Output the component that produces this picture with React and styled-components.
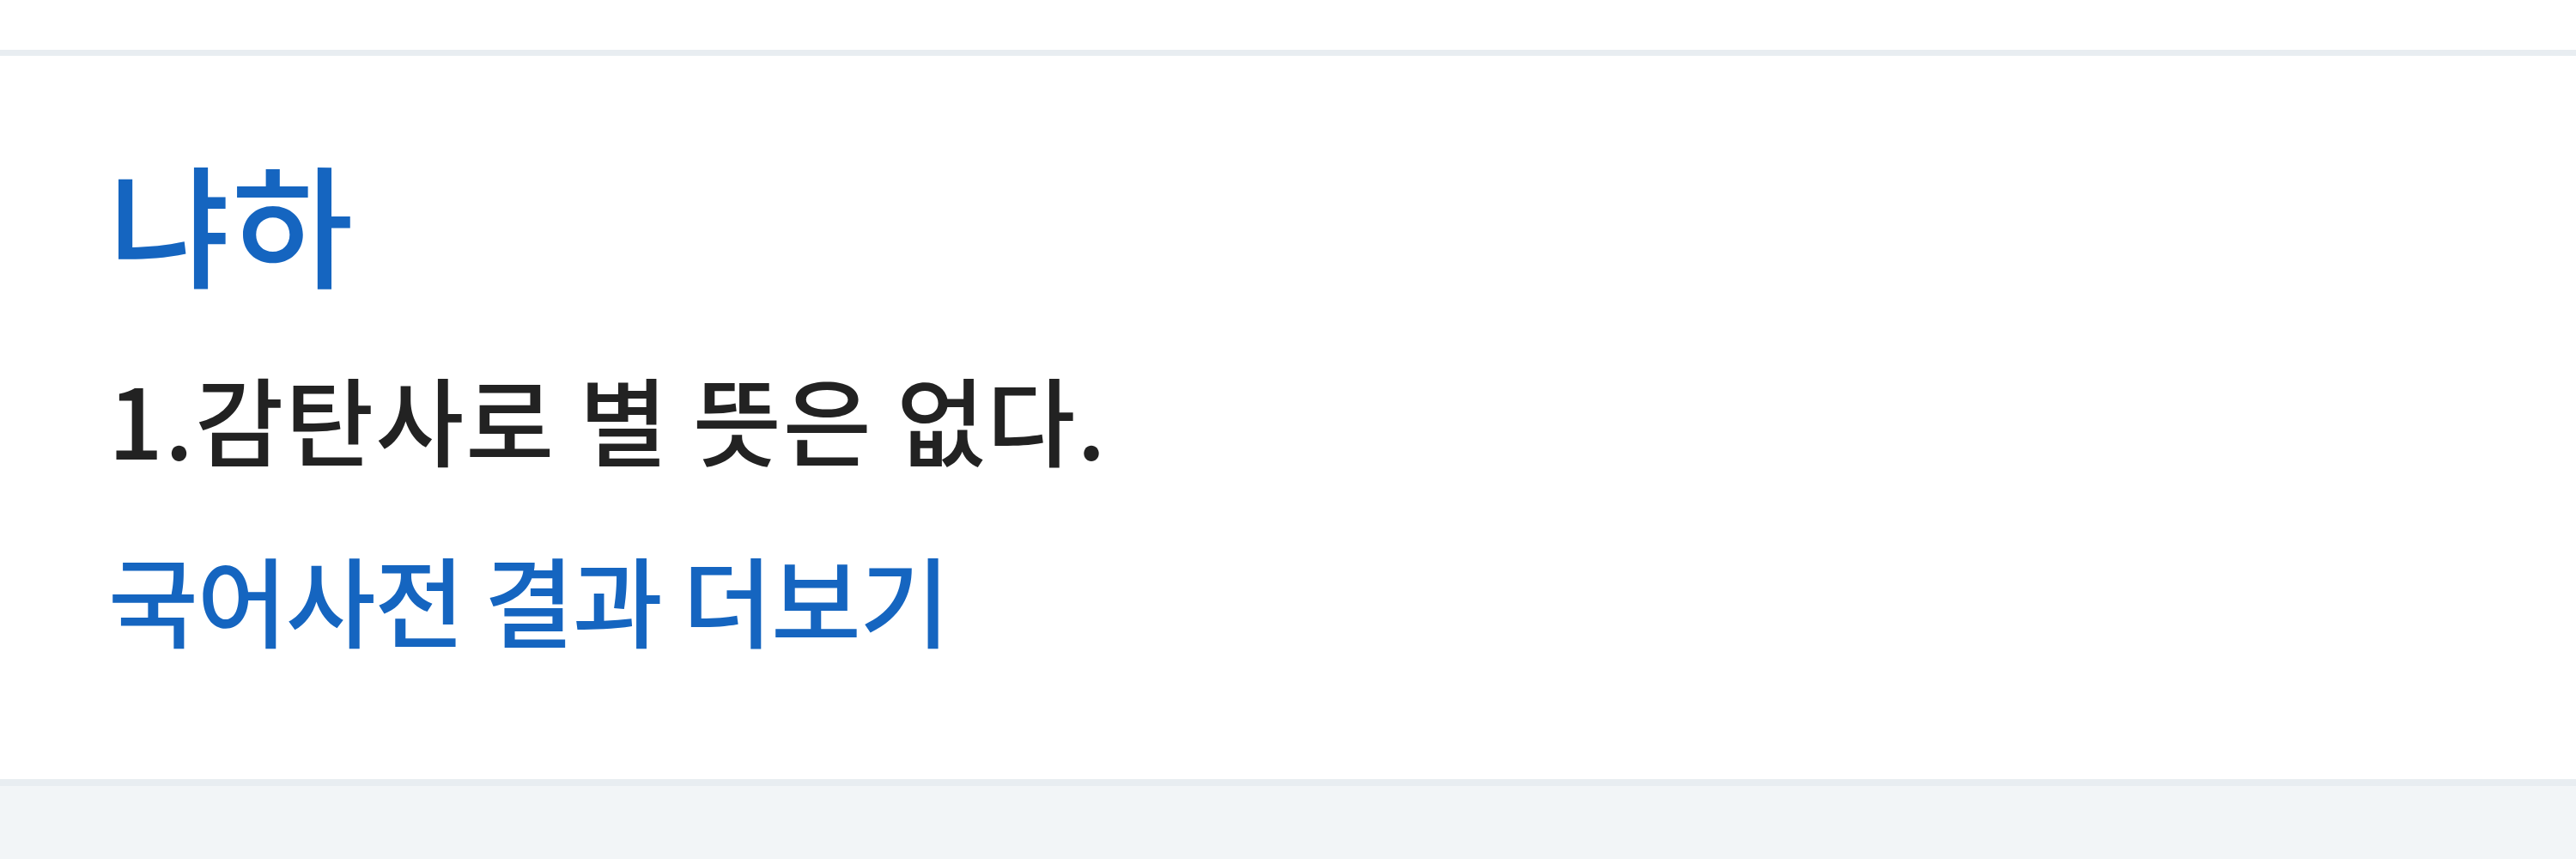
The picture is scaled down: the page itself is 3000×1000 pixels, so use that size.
import styled, { createGlobalStyle } from "styled-components";

const GlobalStyle = createGlobalStyle`
  html, body {
    margin: 0;
    padding: 0;
    background: #f2f5f7;
  }
  body {
    font-family: "Noto Sans CJK KR", "Noto Sans", sans-serif;
  }
`;

const Page = styled.div`
  width: 3000px;
  height: 1000px;
  background: #f2f5f7;
  overflow: hidden;
`;

const TopStrip = styled.div`
  height: 58px;
  background: #ffffff;
  border-bottom: 7px solid #e8edf1;
`;

const Card = styled.section`
  background: #ffffff;
  padding: 92px 126px 0;
  height: 850px;
  box-sizing: border-box;
  border-bottom: 8px solid #e8edf1;
  display: flex;
  flex-direction: column;
  align-items: flex-start;
`;

const Headword = styled.a`
  font-size: 154px;
  font-weight: 500;
  line-height: 200px;
  color: #1565c0;
  text-decoration: none;
  letter-spacing: 2px;
`;

const Meaning = styled.p`
  margin: 54px 0 0;
  font-size: 112px;
  font-weight: 500;
  line-height: 150px;
  color: #222222;
  letter-spacing: 2px;
`;

const MoreLink = styled.a`
  margin-top: 60px;
  font-size: 114px;
  font-weight: 500;
  line-height: 150px;
  color: #1565c0;
  text-decoration: none;
  letter-spacing: -1.5px;
`;

export default function App() {
  return (
    <>
      <GlobalStyle />
      <Page>
        <TopStrip />
        <Card>
          <Headword href="#">냐하</Headword>
          <Meaning>1.감탄사로 별 뜻은 없다.</Meaning>
          <MoreLink href="#">국어사전 결과 더보기</MoreLink>
        </Card>
      </Page>
    </>
  );
}
